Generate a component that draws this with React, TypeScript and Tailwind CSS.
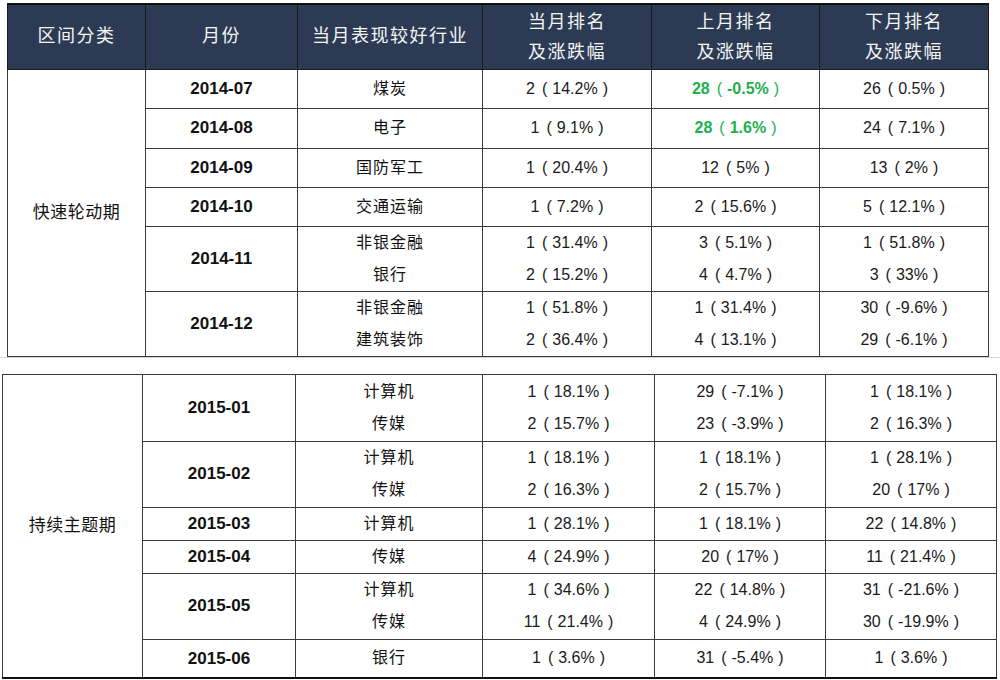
import React from 'react'

interface Row {
  month: string
  industries: string[]
  current: string[]
  previous: string[]
  next: string[]
  green?: boolean
  height: string
}

const topRows: Row[] = [
  { month: '2014-07', industries: ['煤炭'], current: ['2（14.2%）'], previous: ['28（-0.5%）'], next: ['26（0.5%）'], green: true, height: 'h-[39px]' },
  { month: '2014-08', industries: ['电子'], current: ['1（9.1%）'], previous: ['28（1.6%）'], next: ['24（7.1%）'], green: true, height: 'h-[40px]' },
  { month: '2014-09', industries: ['国防军工'], current: ['1（20.4%）'], previous: ['12（5%）'], next: ['13（2%）'], height: 'h-[39px]' },
  { month: '2014-10', industries: ['交通运输'], current: ['1（7.2%）'], previous: ['2（15.6%）'], next: ['5（12.1%）'], height: 'h-[39px]' },
  { month: '2014-11', industries: ['非银金融', '银行'], current: ['1（31.4%）', '2（15.2%）'], previous: ['3（5.1%）', '4（4.7%）'], next: ['1（51.8%）', '3（33%）'], height: 'h-[64px]' },
  { month: '2014-12', industries: ['非银金融', '建筑装饰'], current: ['1（51.8%）', '2（36.4%）'], previous: ['1（31.4%）', '4（13.1%）'], next: ['30（-9.6%）', '29（-6.1%）'], height: 'h-[65px]' },
]

const bottomRows: Row[] = [
  { month: '2015-01', industries: ['计算机', '传媒'], current: ['1（18.1%）', '2（15.7%）'], previous: ['29（-7.1%）', '23（-3.9%）'], next: ['1（18.1%）', '2（16.3%）'], height: 'h-[67px]' },
  { month: '2015-02', industries: ['计算机', '传媒'], current: ['1（18.1%）', '2（16.3%）'], previous: ['1（18.1%）', '2（15.7%）'], next: ['1（28.1%）', '20（17%）'], height: 'h-[66px]' },
  { month: '2015-03', industries: ['计算机'], current: ['1（28.1%）'], previous: ['1（18.1%）'], next: ['22（14.8%）'], height: 'h-[32px]' },
  { month: '2015-04', industries: ['传媒'], current: ['4（24.9%）'], previous: ['20（17%）'], next: ['11（21.4%）'], height: 'h-[33px]' },
  { month: '2015-05', industries: ['计算机', '传媒'], current: ['1（34.6%）', '11（21.4%）'], previous: ['22（14.8%）', '4（24.9%）'], next: ['31（-21.6%）', '30（-19.9%）'], height: 'h-[66px]' },
  { month: '2015-06', industries: ['银行'], current: ['1（3.6%）'], previous: ['31（-5.4%）'], next: ['1（3.6%）'], height: 'h-[39px]' },
]

const font = 'font-["Liberation_Sans","Noto_Sans_CJK_SC",sans-serif]'

// "2（14.2%）" -> rank, then the change in centred brackets like the source sheet
function Figure({ text }: { text: string }) {
  const m = text.match(/^(.*)（(.*)）$/)
  if (!m) return <>{text}</>
  return (
    <>
      {m[1]}
      <span className="ml-[7px] mr-[5px] font-normal">(</span>
      {m[2]}
      <span className="ml-[5px] font-normal">)</span>
    </>
  )
}

function Lines({ items, figures }: { items: string[]; figures?: boolean }) {
  return (
    <div className="flex flex-col">
      {items.map((t, i) => (
        <div key={i} className="h-[32px] leading-[32px] whitespace-nowrap">
          {figures ? <Figure text={t} /> : t}
        </div>
      ))}
    </div>
  )
}

function Body({ rows, label }: { rows: Row[]; label: string }) {
  const cell = 'border border-[#3a3a3a] text-center align-middle'
  return (
    <tbody>
      {rows.map((r, i) => (
        <tr key={r.month} className={r.height}>
          {i === 0 && (
            <td rowSpan={rows.length} className={`${cell} text-[17px] tracking-[0.5px] text-[#111]`}>
              {label}
            </td>
          )}
          <td className={`${cell} text-[17px] font-bold text-[#111]`}>{r.month}</td>
          <td className={`${cell} text-[16px] tracking-[1px] text-[#111]`}>
            <Lines items={r.industries} />
          </td>
          <td className={`${cell} text-[16px] text-[#1a1a1a]`}>
            <Lines items={r.current} figures />
          </td>
          <td className={`${cell} text-[16px] ${r.green ? 'font-bold text-[#21b04b]' : 'text-[#1a1a1a]'}`}>
            <Lines items={r.previous} figures />
          </td>
          <td className={`${cell} text-[16px] text-[#1a1a1a]`}>
            <Lines items={r.next} figures />
          </td>
        </tr>
      ))}
    </tbody>
  )
}

export default function App() {
  return (
    <div className={`w-[1000px] h-[680px] bg-white overflow-hidden ${font}`}>
      <div className="pt-[3px] pl-[7px] border-b border-[#d4d4d4]">
        <table className="w-[981px] table-fixed border-collapse border-t-2 border-t-[#111] border-r border-r-[#222]">
          <colgroup>
            <col className="w-[138px]" />
            <col className="w-[152px]" />
            <col className="w-[185px]" />
            <col className="w-[169px]" />
            <col className="w-[168px]" />
            <col className="w-[169px]" />
          </colgroup>
          <thead>
            <tr className="h-[65px] bg-[#2c3b53] text-[#f4f4f4] text-[18px] tracking-[1.5px]">
              <th className="border border-[#1a1a1a] font-normal">区间分类</th>
              <th className="border border-[#1a1a1a] font-normal">月份</th>
              <th className="border border-[#1a1a1a] font-normal">当月表现较好行业</th>
              <th className="border border-[#1a1a1a] font-normal leading-[30px]">
                当月排名
                <br />
                及涨跌幅
              </th>
              <th className="border border-[#1a1a1a] font-normal leading-[30px]">
                上月排名
                <br />
                及涨跌幅
              </th>
              <th className="border border-[#1a1a1a] font-normal leading-[30px]">
                下月排名
                <br />
                及涨跌幅
              </th>
            </tr>
          </thead>
          <Body rows={topRows} label="快速轮动期" />
        </table>
      </div>

      <div className="pt-[16px] pl-[2px]">
        <table className="w-[994px] table-fixed border-collapse border-t border-t-[#1d4658] border-b-2 border-b-[#111]">
          <colgroup>
            <col className="w-[140px]" />
            <col className="w-[153px]" />
            <col className="w-[187px]" />
            <col className="w-[172px]" />
            <col className="w-[171px]" />
            <col className="w-[171px]" />
          </colgroup>
          <Body rows={bottomRows} label="持续主题期" />
        </table>
      </div>
    </div>
  )
}
